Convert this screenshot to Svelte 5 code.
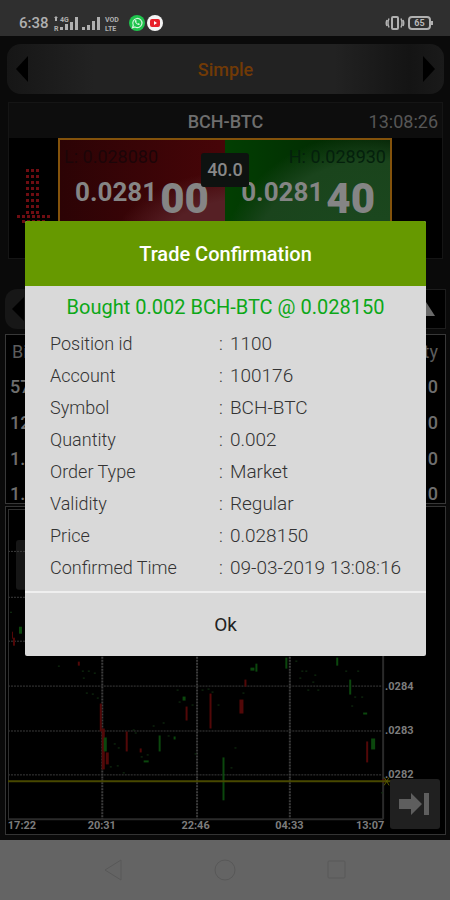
<script>
  const details = [
    { label: 'Position id', value: '1100' },
    { label: 'Account', value: '100176' },
    { label: 'Symbol', value: 'BCH-BTC' },
    { label: 'Quantity', value: '0.002' },
    { label: 'Order Type', value: 'Market' },
    { label: 'Validity', value: 'Regular' },
    { label: 'Price', value: '0.028150' },
    { label: 'Confirmed Time', value: '09-03-2019 13:08:16' }
  ];

  const depthRows = [
    { bid: '57', qty: '0' },
    { bid: '12', qty: '0' },
    { bid: '1.', qty: '0' },
    { bid: '1.', qty: '0' }
  ];

  const priceLines = [44, 90, 134, 179, 224, 268];
  const timeLines = [96, 191, 284];

  const priceLabels = [
    { text: '.0284', y: 183 },
    { text: '.0283', y: 228 },
    { text: '.0282', y: 272 }
  ];

  const timeLabels = [
    { text: '17:22', x: 16 },
    { text: '20:31', x: 96 },
    { text: '22:46', x: 190 },
    { text: '04:33', x: 284 },
    { text: '13:07', x: 365 }
  ];

  // x, top, bottom, width
  const falls = [
    [6, 125, 132, 1], [7, 131, 139, 2], [72, 155, 159, 2], [94, 197, 225, 2], [96, 222, 263, 3],
    [100, 246, 258, 3], [120, 225, 245, 2], [134, 242, 246, 2], [180, 200, 214, 2],
    [204, 187, 222, 2], [239, 173, 180, 2], [234, 193, 207, 4], [361, 235, 256, 2], [377, 273, 276, 3]
  ];

  const rises = [
    [13, 120, 127, 3], [98, 231, 245, 3], [153, 229, 245, 2], [177, 190, 194, 3], [168, 230, 233, 2],
    [217, 251, 294, 2], [250, 157, 165, 2], [245, 161, 164, 4], [280, 151, 162, 2],
    [331, 151, 159, 2], [344, 173, 188, 2], [366, 232, 243, 4], [358, 206, 208, 4], [138, 254, 256, 5]
  ];

  const specks = [
    [4, 105], [52, 159], [76, 164], [82, 164], [88, 166], [77, 171], [80, 186], [86, 187], [91, 191],
    [108, 237], [112, 241], [127, 223], [104, 260], [111, 259], [117, 266], [129, 226], [135, 250],
    [141, 248], [147, 219], [157, 216], [162, 229], [171, 183], [173, 195], [196, 183], [202, 182],
    [206, 185], [186, 198], [212, 198], [229, 241], [225, 261], [237, 186], [290, 154], [296, 164],
    [300, 164], [294, 171], [309, 168], [307, 175], [302, 183], [312, 183], [340, 164], [352, 164],
    [349, 190], [356, 190], [346, 199], [376, 286], [189, 247]
  ];

  const depthDots = [0, 1, 2, 3, 4, 5, 6, 7];

  let open = $state(true);
</script>

<div class="screen">
  <header class="status">
    <div class="status-side">
      <span class="clock">6:38</span>
      <svg width="76" height="18" viewBox="0 0 76 18" fill="#b0b0b0" aria-hidden="true">
        <path d="M5 2l2 2H6v3H4V4H3z" />
        <text x="3" y="17" class="tiny">R</text>
        <text x="9" y="8" class="tiny">4G</text>
        <path d="M9 13h3v3H9zM14 10h3v6h-3zM19 8h3v8h-3zM24 3h3v13h-3z" />
        <path d="M31 13h3v3h-3zM36 11h3v5h-3zM41 7h3v9h-3zM46 3h3v13h-3z" />
        <text x="54" y="8" class="tiny">VOD</text>
        <text x="54" y="17" class="tiny">LTE</text>
      </svg>
      <svg width="16" height="16" viewBox="0 0 16 16" aria-hidden="true">
        <circle cx="8" cy="8" r="8" fill="#1fc44d" />
        <path d="M3.5 12.8l.8-2.6a4.6 4.6 0 1 1 1.7 1.8z" fill="none" stroke="#d5f3dc" stroke-width="1.2" />
        <path d="M6 5.2c-.9 1.6 1.9 5 4.3 4.9l.6-1.2-1.4-.8-.6.6c-.8-.3-1.4-1-1.7-1.7l.5-.7-.6-1.3z" fill="#d5f3dc" />
      </svg>
      <svg width="16" height="16" viewBox="0 0 16 16" aria-hidden="true">
        <circle cx="8" cy="8" r="8" fill="#f4f4f4" />
        <rect x="3" y="4" width="10" height="8" rx="2" fill="#e8202a" />
        <path d="M7 6l3 2-3 2z" fill="#fff" />
      </svg>
    </div>
    <svg width="48" height="16" viewBox="0 0 48 16" fill="none" stroke="#b0b0b0" aria-hidden="true">
      <rect x="7" y="2" width="6" height="12" rx="1" stroke-width="2" />
      <path d="M4 3.5q-2 4.5 0 9M16 3.5q2 4.5 0 9M2 5q-1.5 3 0 6M18 5q1.5 3 0 6" stroke-width="1.5" />
      <rect x="24" y="2" width="21" height="12" rx="3" stroke-width="2" />
      <path d="M47 6v4" stroke-width="2" />
      <text x="34.5" y="11" text-anchor="middle" class="battery">65</text>
    </svg>
  </header>

  <main>
    <nav class="selector">
      <button aria-label="Previous view">
        <svg width="12" height="26" viewBox="0 0 12 26"><path d="M12 0v26L0 13z" /></svg>
      </button>
      <span>Simple</span>
      <button aria-label="Next view">
        <svg width="12" height="26" viewBox="0 0 12 26"><path d="M0 0v26l12-13z" /></svg>
      </button>
    </nav>

    <section class="quote">
      <div class="quote-head">
        <span></span>
        <h2>BCH-BTC</h2>
        <time>13:08:26</time>
      </div>
      <div class="quote-body">
        <svg class="depth" width="36" height="64" viewBox="0 0 36 64" fill="#6e0d12" aria-hidden="true">
          {#each depthDots as i}
            <rect x="10" y={1 + i * 6} width="3" height="3" />
            <rect x="15" y={1 + i * 6} width="3" height="3" />
            <rect x="20" y={1 + i * 6} width="3" height="3" />
          {/each}
          {#each [0, 1, 2, 3, 4, 5, 6] as i}
            <rect x={i * 5 + 1} y="47" width="3" height="3" />
          {/each}
          {#each [0, 1, 2, 3, 4] as i}
            <rect x={i * 5 + 6} y="52" width="3" height="3" />
          {/each}
        </svg>
        <div class="tiles">
          <button class="tile sell">
            <span class="limit">L: 0.028080</span>
            <span class="price">0.0281<b>00</b></span>
          </button>
          <button class="tile buy">
            <span class="limit">H: 0.028930</span>
            <span class="price">0.0281<b>40</b></span>
          </button>
          <span class="spread">40.0</span>
        </div>
      </div>
    </section>

    <nav class="pager">
      <button class="pager-back" aria-label="Previous panel">
        <svg width="12" height="24" viewBox="0 0 12 24"><path d="M12 0v24L0 12z" /></svg>
      </button>
      <button class="pager-up" aria-label="Expand">
        <svg width="18" height="14" viewBox="0 0 18 14"><path d="M9 0l9 14H0z" fill="#6a6a6a" /></svg>
      </button>
    </nav>

    <div class="book">
      <table>
        <thead>
          <tr><th scope="col">Bid</th><th scope="col">Qty</th></tr>
        </thead>
        <tbody>
          {#each depthRows as row}
            <tr><td>{row.bid}</td><td>{row.qty}</td></tr>
          {/each}
        </tbody>
      </table>
    </div>

    <section class="chart">
      <svg viewBox="0 0 440 328" role="img" aria-label="BCH-BTC price chart">
        <rect x="10" y="33" width="20" height="50" rx="3" fill="#161616" />
        <g stroke="#3c3c3c" stroke-dasharray="2 1">
          {#each priceLines as y}
            <path d="M2 {y}.5H378" />
          {/each}
          {#each timeLines as x}
            <path d="M{x}.5 0V313" stroke-width="2" />
          {/each}
        </g>
        <path d="M2.5 2V313M2 2.5H378" stroke="#303030" fill="none" />
        <path d="M378 0V313M2 313H378" stroke="#2a2a2a" stroke-width="2" fill="none" />
        {#each specks as [x, y]}
          <rect {x} {y} width="2" height="1" fill="#123412" />
        {/each}
        {#each falls as [x, top, bottom, width]}
          <rect {x} y={top} {width} height={bottom - top} fill="#520808" />
        {/each}
        {#each rises as [x, top, bottom, width]}
          <rect {x} y={top} {width} height={bottom - top} fill="#0b470d" />
        {/each}
        {#each priceLabels as label}
          <text x="380" y={label.y}>{label.text}</text>
        {/each}
        {#each timeLabels as label}
          <text x={label.x} y="323" text-anchor="middle">{label.text}</text>
        {/each}
        <path d="M2 275H407" stroke="#484800" stroke-width="2" />
        <path d="M379 271l5 8M384 271l-5 8" stroke="#5a5a00" />
      </svg>
      <button class="latest" aria-label="Go to latest">
        <svg width="32" height="24" viewBox="0 0 32 24" fill="#5e5e5e">
          <path d="M0 7h12V1l11 11-11 11v-6H0zM25 1h5v22h-5z" />
        </svg>
      </button>
    </section>

    {#if open}
      <div class="overlay">
        <div class="dialog" role="dialog" aria-labelledby="dialog-title">
          <h1 id="dialog-title">Trade Confirmation</h1>
          <p class="summary">Bought 0.002 BCH-BTC @ 0.028150</p>
          <table class="details">
            <tbody>
              {#each details as item}
                <tr>
                  <th scope="row">{item.label}</th>
                  <td class="colon">:</td>
                  <td>{item.value}</td>
                </tr>
              {/each}
            </tbody>
          </table>
          <button class="ok" onclick={() => (open = false)}>Ok</button>
        </div>
      </div>
    {/if}
  </main>

  <nav class="system">
    <button aria-label="Back">
      <svg width="20" height="24" viewBox="0 0 20 24"><path d="M18 2v20L2 12z" /></svg>
    </button>
    <button aria-label="Home">
      <svg width="24" height="24" viewBox="0 0 24 24"><circle cx="12" cy="12" r="10" /></svg>
    </button>
    <button aria-label="Recents">
      <svg width="20" height="20" viewBox="0 0 20 20"><rect x="1" y="1" width="17" height="17" rx="1" /></svg>
    </button>
  </nav>
</div>

<style>
  :global(body) {
    margin: 0;
    background: #0a0a0a;
  }

  .screen {
    display: flex;
    flex-direction: column;
    min-height: 100vh;
    font-family: Roboto, 'Liberation Sans', sans-serif;
    font-size: 18px;
    color: #6e6e6e;
  }

  button {
    padding: 0;
    border: 0;
    background: none;
    font: inherit;
    color: inherit;
    cursor: pointer;
  }

  svg {
    display: block;
  }

  .status {
    display: flex;
    justify-content: space-between;
    align-items: center;
    box-sizing: border-box;
    height: 36px;
    padding: 10px 17px 0 19px;
    background: #2f2f2f;
  }

  .status-side {
    display: flex;
    align-items: center;
    gap: 2px;
  }

  .clock {
    font-size: 15px;
    font-weight: 500;
    color: #b0b0b0;
  }

  .battery {
    font-size: 9px;
    font-weight: 700;
    fill: #b8b8b8;
    stroke: none;
  }

  .tiny {
    font-size: 7px;
    font-weight: 700;
  }

  main {
    position: relative;
    flex: 1;
    display: flex;
    flex-direction: column;
    padding: 8px 4px 4px 5px;
    background: #0a0a0a;
  }

  .selector {
    display: flex;
    justify-content: space-between;
    align-items: center;
    height: 50px;
    margin: 0 2px 8px;
    padding: 0 9px;
    border-radius: 14px;
    background: linear-gradient(90deg, #161616, #222 20%, #222 75%, #141414 92%, #1a1a1a);
    font-weight: 500;
    color: #713a06;
  }

  .quote {
    height: 155px;
    margin: 0 3px 30px;
    border: 1px solid #151515;
    background: #000;
  }

  .quote-head {
    display: grid;
    grid-template-columns: 1fr auto 1fr;
    align-items: center;
    height: 35px;
    padding: 2px 4px 0;
    box-sizing: border-box;
    background: #0d0d0d;
  }

  .quote-head h2 {
    margin: 0;
    font-size: 18px;
    font-weight: 500;
  }

  .quote-head time {
    text-align: right;
    color: #565656;
  }

  .quote-body {
    display: flex;
    height: 120px;
    padding: 0 50px 0 7px;
  }

  .depth {
    margin: 30px 6px 0 0;
  }

  .tiles {
    position: relative;
    flex: 1;
    display: flex;
    border: 2px solid #83520b;
  }

  .tile {
    flex: 1;
    display: flex;
    flex-direction: column;
    align-items: flex-start;
    padding: 7px 4px;
  }

  .sell {
    background:
      radial-gradient(ellipse at 110% 90%, #562025 0, #562025 30%, transparent 50%),
      linear-gradient(90deg, #2c0305, #470508);
  }

  .buy {
    align-items: flex-end;
    background:
      radial-gradient(ellipse at 90% 120%, #1c4a20 0, #1a441c 60%, transparent 75%),
      linear-gradient(90deg, #023f02, #022002);
  }

  .limit {
    line-height: 20px;
    color: #1c0508;
  }

  .buy .limit {
    color: #04200c;
  }

  .price {
    display: flex;
    gap: 3px;
    padding: 10px 11px;
    font-size: 26px;
    font-weight: 700;
    line-height: 30px;
    color: #858585;
  }

  .price b {
    font-size: 42px;
    line-height: 44px;
  }

  .spread {
    position: absolute;
    top: 13px;
    left: 50%;
    transform: translateX(-50%);
    width: 48px;
    border-radius: 3px;
    background: #0e1210;
    font-weight: 500;
    line-height: 34px;
    text-align: center;
    color: #888;
  }

  .pager {
    display: flex;
    justify-content: space-between;
    height: 40px;
    margin-bottom: 5px;
  }

  .pager button {
    width: 60px;
  }

  .pager-back {
    padding-left: 7px;
    border-radius: 12px;
    background: #171717;
  }

  .pager .pager-up {
    display: flex;
    justify-content: flex-end;
    align-items: center;
    padding-right: 10px;
    border: 1px solid #1d1d1d;
    background: #000;
  }

  .book {
    border: 1px solid #383838;
    background: #000;
  }

  .book table {
    width: 100%;
    border-collapse: collapse;
  }

  .book th,
  .book td {
    height: 36px;
    padding: 0 7px 0 4px;
    font-weight: 500;
    line-height: 20px;
    text-align: left;
  }

  .book th {
    height: 34px;
    padding-left: 6px;
    font-weight: 400;
    color: #5c5c5c;
  }

  .book th:last-child,
  .book td:last-child {
    text-align: right;
  }

  .book tr:last-child td {
    height: 24px;
    padding-top: 8px;
    vertical-align: top;
  }

  .book tbody tr:last-child td {
    height: 18px;
    line-height: 18px;
  }

  .chart {
    position: relative;
    margin-top: 2px;
    border: 1px solid #343434;
    background: #000;
  }

  .chart text {
    font-size: 11px;
    font-weight: 700;
    fill: #7c7c7c;
  }

  .latest {
    position: absolute;
    right: 5px;
    bottom: 5px;
    display: grid;
    place-items: center;
    width: 50px;
    height: 50px;
    border-radius: 3px;
    background: #202020;
  }

  .overlay {
    position: absolute;
    inset: 0;
    display: grid;
    place-items: center;
    padding: 0 24px 0 25px;
  }

  .dialog {
    display: flex;
    flex-direction: column;
    width: 100%;
    border-radius: 2px;
    overflow: hidden;
    background: #d9d9d9;
    color: #333;
  }

  .dialog h1 {
    margin: 0;
    background: #669900;
    font-size: 20px;
    font-weight: 500;
    line-height: 64px;
    padding-top: 1px;
    text-align: center;
    color: #fff;
  }

  .summary {
    margin: 0;
    padding: 6px 0;
    font-size: 20px;
    line-height: 30px;
    text-align: center;
    color: #0ca818;
  }

  .details {
    margin: 0 25px 7px;
    border-collapse: collapse;
  }

  .details th,
  .details td {
    height: 32px;
    padding: 0;
    font-size: 19px;
    font-weight: 300;
    text-align: left;
    white-space: nowrap;
  }

  .details th {
    width: 169px;
    font-size: 18px;
  }

  .details .colon {
    width: 11px;
    font-size: 18px;
  }

  .ok {
    height: 65px;
    border-top: 2px solid #efefef;
    font-size: 19px;
    color: #222;
  }

  .system {
    display: flex;
    justify-content: center;
    align-items: center;
    gap: 88px;
    height: 60px;
    background: #646464;
  }

  .system button {
    width: 24px;
  }

  .system svg {
    margin: 0 auto;
    fill: none;
    stroke: #585858;
  }
</style>
